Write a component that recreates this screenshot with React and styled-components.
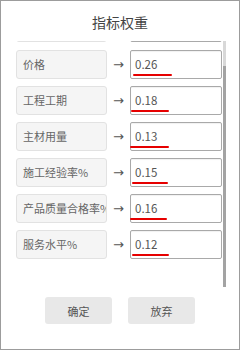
import React, { useLayoutEffect, useRef } from 'react';
import styled, { createGlobalStyle } from 'styled-components';

const GlobalStyle = createGlobalStyle`
  html, body {
    margin: 0;
    padding: 0;
    background: #fff;
  }
  body {
    font-family: "Noto Sans CJK SC", "Noto Sans", sans-serif;
  }
`;

const Dialog = styled.div`
  box-sizing: border-box;
  width: 240px;
  height: 350px;
  border: 1px solid #9c9c9c;
  background: #fff;
  display: flex;
  flex-direction: column;
`;

const Title = styled.h1`
  margin: 10px 0 8px;
  height: 22px;
  line-height: 22px;
  text-align: center;
  font-size: 14px;
  font-weight: normal;
  color: #444;
`;

const ScrollFrame = styled.div`
  display: flex;
  margin-left: 15px;
  height: 246px;
`;

const Viewport = styled.div`
  width: 206px;
  height: 100%;
  overflow: hidden;
`;

const Track = styled.div`
  display: flex;
  flex-direction: column;
  justify-content: flex-end;
  width: 3px;
  margin-left: 1px;
  background: #d8d8d8;
`;

const Thumb = styled.div`
  height: ${p => p.$size}px;
  background: #a3a3a3;
`;

const List = styled.div`
  display: flex;
  flex-direction: column;
  gap: 8px;
  padding-bottom: 29px;
`;

const Row = styled.div`
  display: grid;
  grid-template-columns: 91px 1fr 92px;
  height: 28px;
`;

const Label = styled.div`
  box-sizing: border-box;
  background: #f5f5f5;
  border: 1px solid #e2e2e2;
  border-radius: 3px;
  padding-left: 6px;
  font-size: 11px;
  line-height: 26px;
  color: #666;
  white-space: nowrap;
  overflow: hidden;
`;

const Arrow = styled.span`
  text-align: center;
  font-family: "DejaVu Sans", sans-serif;
  font-size: 13px;
  line-height: 29px;
  color: #555;
`;

const ValueBox = styled.div`
  position: relative;
  box-sizing: border-box;
  border: 1px solid #a9a9a9;
  border-radius: 2px;
  box-shadow: inset 0 1px 1px rgba(0, 0, 0, 0.06);
  padding-left: 4px;
  font-size: 11.5px;
  line-height: 26px;
  color: #555;
`;

const Squiggle = styled.span`
  position: absolute;
  left: ${p => p.$left}px;
  top: 23px;
  width: ${p => p.$width}px;
  height: 2px;
  background: #e60000;
  border-radius: 1px;
`;

const Footer = styled.div`
  display: flex;
  justify-content: center;
  gap: 16px;
  margin-top: 10px;
`;

const Button = styled.button`
  width: 67px;
  height: 27px;
  border: none;
  border-radius: 3px;
  background: #e8e8e8;
  font-family: "Noto Sans CJK SC", sans-serif;
  font-size: 11px;
  color: #555;
  padding: 0;
`;

const weights = [
  { id: 'top', label: '', value: '' },
  { id: 'price', label: '价格', value: '0.26', left: 2, width: 39 },
  { id: 'period', label: '工程工期', value: '0.18', left: 0, width: 38 },
  { id: 'material', label: '主材用量', value: '0.13', left: -1, width: 39 },
  { id: 'exp', label: '施工经验率%', value: '0.15', left: 1, width: 36 },
  { id: 'quality', label: '产品质量合格率%', value: '0.16', left: -1, width: 37 },
  { id: 'service', label: '服务水平%', value: '0.12', left: 1, width: 37 },
];

export default function App() {
  const viewRef = useRef(null);

  useLayoutEffect(() => {
    if (viewRef.current) viewRef.current.scrollTop = 27;
  }, []);

  return (
    <>
      <GlobalStyle />
      <Dialog>
        <Title>指标权重</Title>
        <ScrollFrame>
          <Viewport ref={viewRef}>
            <List>
              {weights.map(w => (
                <Row key={w.id}>
                  <Label>{w.label}</Label>
                  <Arrow>{w.value && '→'}</Arrow>
                  <ValueBox>
                    {w.value}
                    {w.value && <Squiggle $left={w.left} $width={w.width} />}
                  </ValueBox>
                </Row>
              ))}
            </List>
          </Viewport>
          <Track>
            <Thumb $size={221} />
          </Track>
        </ScrollFrame>
        <Footer>
          <Button>确定</Button>
          <Button>放弃</Button>
        </Footer>
      </Dialog>
    </>
  );
}
